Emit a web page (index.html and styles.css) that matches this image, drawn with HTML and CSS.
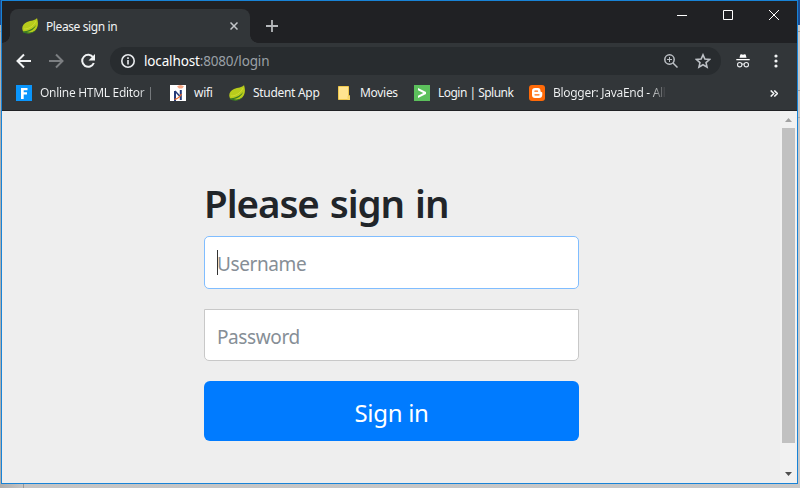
FILE: index.html
```html
<!DOCTYPE html>
<html lang="en">
<head>
<meta charset="utf-8">
<title>Please sign in</title>
<link rel="stylesheet" href="styles.css">
</head>
<body>
<svg width="0" height="0" class="defs" aria-hidden="true">
  <symbol id="leaf" viewBox="0 0 16 16">
    <path fill="#b8cc1c" d="M15 0C13 3 9 2 5 4C1 6-.5 9 .6 12.3C1 14 2 14.5 4 14.8C8 16 13 14 15 10C16.5 7 16 3 15 0Z"/>
    <path fill="#397a24" d="M.6 13.400C5 13.200 11 11.500 14 7C13 10.500 9 13.500 4.500 14C8 15 12 14 14 12C11 16 5 16.500 1 14.500Z"/>
    <path fill="none" stroke="#d0dc30" stroke-width="1" d="M2 11C6 11 11 9 14 3"/>
  </symbol>
</svg>
<main class="window">
  <header class="tabstrip">
    <div class="tab">
      <svg class="favicon"><use href="#leaf"/></svg>
      <span class="tab-title">Please sign in</span>
      <svg class="tab-close" viewBox="0 0 8 8"><path d="M.5.5l7 7M7.5.5l-7 7"/></svg>
    </div>
    <svg class="new-tab" viewBox="0 0 12 12"><path d="M6 0v12M0 6h12"/></svg>
    <div class="controls">
      <svg viewBox="0 0 10 10"><path d="M0 5.5h10"/></svg>
      <svg viewBox="0 0 10 10"><path d="M.5.5h9v9h-9z"/></svg>
      <svg viewBox="0 0 10 10"><path d="M0 0l10 10M10 0L0 10"/></svg>
    </div>
  </header>
  <nav class="toolbar">
    <svg class="nav-icon" viewBox="0 0 16 16"><path d="M15 8H2M8 1.5L1.5 8L8 14.500"/></svg>
    <svg class="nav-icon dim" viewBox="0 0 16 16"><path d="M1 8h13M8 1.5L14.500 8L8 14.500"/></svg>
    <svg class="nav-icon" viewBox="0 0 16 16"><path d="M13.200 4.500A6 6 0 1 0 13.800 10"/><path class="solid" d="M15 1v6.500H8.500z"/></svg>
    <div class="omnibox">
      <svg class="info" viewBox="0 0 14 14"><circle cx="7" cy="7" r="6.200"/><path d="M7 6v4.500M7 3.300v1.600"/></svg>
      <span class="url"><b>localhost</b>:8080/login</span>
      <svg class="magnify" viewBox="0 0 14 14"><circle cx="5.500" cy="5.500" r="4.700"/><path d="M9 9l4.500 4.500"/><path class="thin" d="M3 5.500h5M5.500 3v5"/></svg>
      <svg class="star" viewBox="0 0 14 14"><path d="M7 1.600l1.650 3.700 4 .4-3 2.700.9 4L7 10.300l-3.550 2.100.9-4-3-2.700 4-.4z"/></svg>
    </div>
    <svg class="incognito" viewBox="0 0 14 14"><path class="fill" d="M3.500 3.800L4.300.7q.2-.7.900-.5L7 .7 8.800.2q.7-.2.900.5l.8 3.100zM.3 5h13.400v1.300H.3z"/><circle cx="3.700" cy="10.700" r="2.200"/><circle cx="10.300" cy="10.700" r="2.200"/><path d="M5.900 10.300q1.100-.7 2.200 0"/></svg>
    <svg class="more" viewBox="0 0 4 14"><circle cx="2" cy="2" r="1.600"/><circle cx="2" cy="7" r="1.600"/><circle cx="2" cy="12" r="1.600"/></svg>
  </nav>
  <nav class="bookmarks">
    <a class="bm bm-editor"><svg viewBox="0 0 16 16"><path fill="#0a96fc" d="M0 0h16v16H0z"/><path fill="#fff" d="M5 3h6.500v2.300H7.700v2h3.300v2.200H7.700V14H5z"/></svg><span>Online HTML Editor |</span></a>
    <a class="bm bm-wifi"><svg viewBox="0 0 16 16"><path fill="#fff" d="M0 0h16v16H0z"/><path fill="#f6a583" d="M7 1.500Q10.500-1.500 14 1.500L12 3.500H9z"/><path fill="#243a79" d="M4 6h2v10H4zM9.800 5h2v10h-2z"/><path fill="none" stroke="#243a79" stroke-width="1.500" d="M5 6l5.500 6"/><path fill="none" stroke="#e9692c" stroke-width="1.400" d="M4.500 14.500Q9 13.500 11.500 9"/></svg><span>wifi</span></a>
    <a class="bm bm-student"><svg><use href="#leaf"/></svg><span>Student App</span></a>
    <a class="bm bm-movies"><svg viewBox="0 0 16 16"><path fill="#ffe48f" stroke="#efc84d" d="M2.500 1.500h10v9h1v4h-11z"/><path fill="#f5d568" d="M11.500 11h2.500v4h-2.500z"/></svg><span>Movies</span></a>
    <a class="bm bm-splunk"><svg viewBox="0 0 16 16"><path fill="#5cc05c" d="M0 0h16v16H0z"/><path fill="#fff" d="M4 3l8 4v2l-8 4v-2.200L9.300 8 4 5.200z"/></svg><span>Login | Splunk</span></a>
    <a class="bm bm-blogger"><svg viewBox="0 0 16 16"><rect width="16" height="16" rx="3" fill="#ff6a08"/><path fill="#fff" d="M6 3h3q2.500 0 2.500 3 0 1 1 1 .8 0 .8 1v1.500Q13.300 13 10 13H6q-3 0-3-3V6q0-3 3-3z"/><path stroke="#ff6a08" stroke-width="1.300" stroke-linecap="round" d="M6 6.200h2.500M6 9.800h4"/></svg><span>Blogger: JavaEnd - All</span></a>
    <svg class="overflow" viewBox="0 0 8 7"><path d="M.7.5l3 3-3 3M4.300.5l3 3-3 3"/></svg>
  </nav>
  <section class="viewport">
    <form class="signin">
      <h1>Please sign in</h1>
      <div class="field username"><i class="caret"></i><span>Username</span></div>
      <div class="field password"><span>Password</span></div>
      <button type="button"><span>Sign in</span></button>
    </form>
    <aside class="scrollbar">
      <svg viewBox="0 0 7 4"><path fill="#a3a3a3" d="M0 4L3.500 0 7 4z"/></svg>
      <div class="thumb"></div>
      <svg viewBox="0 0 7 4"><path fill="#505050" d="M0 0h7L3.500 4z"/></svg>
    </aside>
  </section>
</main>
</body>
</html>
```

FILE: styles.css
```css
* { box-sizing: border-box; }
body {
  margin: 0; width: 800px; height: 488px; overflow: hidden;
  padding: 0 2px 4px 1px;
  font-family: "Noto Sans", "Open Sans", sans-serif;
  background:
    linear-gradient(#1d4f94, #1d4f94) 0 0 / 100% 25px no-repeat,
    linear-gradient(#999, #999) 0 31px / 100% 1px no-repeat,
    linear-gradient(#999, #999) 100% 90px / 2px 1px no-repeat,
    linear-gradient(#aaa, #aaa) 0 117px / 100% 1px no-repeat,
    linear-gradient(#999, #999) 23px 100% / 1px 4px no-repeat,
    linear-gradient(90deg, #adadad, #c4c4c4 23px, #c8c8c8);
}
.defs { position: absolute; }
svg { display: block; flex: none; fill: none; }
.window { height: 484px; border: 1px solid #1883d7; display: flex; flex-direction: column; background: #323639; }
.tabstrip { height: 42px; display: flex; align-items: flex-start; background: #202124; padding-left: 8px; }
.tab { position: relative; margin-top: 8px; width: 240px; height: 34px; background: #323639; border-radius: 8px 8px 0 0; display: flex; align-items: center; padding: 0 12px; }
.tab::before, .tab::after { content: ""; position: absolute; bottom: 0; width: 8px; height: 8px; }
.tab::before { left: -8px; background: radial-gradient(circle at 0 0, transparent 7.5px, #323639 8px); }
.tab::after { right: -8px; background: radial-gradient(circle at 100% 0, transparent 7.5px, #323639 8px); }
.favicon { width: 16px; height: 16px; }
.tab-title { margin-left: 8px; font-size: 12px; letter-spacing: -0.4px; color: #f1f3f4; flex: 1; white-space: nowrap; }
.tab-close { width: 8px; height: 8px; stroke: #c4c7ca; stroke-width: 1.5; }
.new-tab { width: 12px; height: 12px; margin: 19px 0 0 16px; stroke: #b5b8bb; stroke-width: 1.8; }
.controls { display: flex; gap: 36px; margin: 9px 18px 0 auto; stroke: #fff; }
.controls svg { width: 10px; height: 10px; overflow: visible; }
.toolbar { height: 35px; display: flex; align-items: center; padding-left: 14px; }
.nav-icon { width: 16px; height: 16px; margin-right: 16px; stroke: #f1f3f4; stroke-width: 2; }
.nav-icon.dim { stroke: #7c7f82; }
.solid { fill: #f1f3f4; stroke: none; }
.omnibox { width: 611px; height: 28px; margin-left: -2px; margin-top: 1px; border-radius: 14px; background: #282c2f; display: flex; align-items: center; padding: 0 11px; }
.info { width: 14px; height: 14px; stroke: #e8eaed; stroke-width: 1.6; }
.url { margin-left: 9px; flex: 1; font-size: 13.5px; letter-spacing: -0.15px; color: #9aa0a6; white-space: nowrap; }
.url b { font-weight: 400; color: #fff; }
.magnify { width: 14px; height: 14px; margin-right: 17px; stroke: #bdc1c6; stroke-width: 1.5; }
.thin { stroke-width: 1; }
.star { width: 16px; height: 16px; margin-right: -1px; stroke: #bdc1c6; stroke-width: 1.4; }
.incognito { width: 14px; height: 14px; margin-left: 15px; stroke: #e8eaed; stroke-width: 1.1; }
.incognito .fill { fill: #fff; stroke: none; }
.more { width: 4px; height: 14px; margin-left: 24px; fill: #f1f3f4; }
.bookmarks { height: 33px; display: flex; align-items: center; padding: 0 19px 2px 14px; border-bottom: 1px solid #202124; }
.bm { display: flex; align-items: center; gap: 8px; font-size: 12px; color: #f1f3f4; white-space: nowrap; }
.bm svg { width: 16px; height: 16px; }
.bm span { letter-spacing: -0.3px; margin-top: -1px; }
.bm-editor { width: 154px; }
.bm-wifi { width: 59px; }
.bm-student { width: 107px; }
.bm-movies { width: 78px; }
.bm-splunk { width: 115px; }
.bm.bm-splunk span { letter-spacing: -0.52px; }
.bm-editor span { color: transparent; background: linear-gradient(90deg, #f1f3f4 86%, #62666a 100%); background-clip: text; }
.bm-blogger span { color: transparent; background: linear-gradient(90deg, #f1f3f4 86%, #36393c 100%); background-clip: text; }
.overflow { width: 8px; height: 7px; margin-left: auto; stroke: #f1f3f4; stroke-width: 1.6; }
.viewport { flex: 1; display: flex; background: #eee; }
.signin { width: 375px; margin: 70px 0 0 202px; }
h1 { margin: 0; height: 55px; line-height: 45px; font-size: 38.5px; font-weight: 600; letter-spacing: -1.05px; word-spacing: 2px; color: #212529; white-space: nowrap; }
.field { background: #fff; border: 1px solid #c8c8c8; display: flex; align-items: center; padding: 3px 12px 0; font-size: 19px; letter-spacing: -0.4px; color: #868e96; }
.username { height: 53px; border-color: #80bdff; border-radius: 5px; padding-top: 2px; }
.username span { margin-left: -1px; }
.password { height: 52px; margin-top: 20px; border-radius: 0 0 5px 5px; }
.caret { width: 1px; height: 25px; margin: -3px 0 0; background: #333; }
button { display: block; width: 375px; height: 60px; margin-top: 20px; padding: 2px 0 0; border: 0; border-radius: 6px; background: #007bff; color: #fff; font: 24px "Noto Sans", sans-serif; letter-spacing: -0.3px; }
.scrollbar { width: 17px; margin-left: auto; background: #f1f1f1; display: flex; flex-direction: column; align-items: center; padding: 7px 0 7px; }
.scrollbar svg { width: 7px; height: 4px; }
.thumb { width: 13px; height: 315px; margin: 6px 0 auto; background: #c1c1c1; }
```
